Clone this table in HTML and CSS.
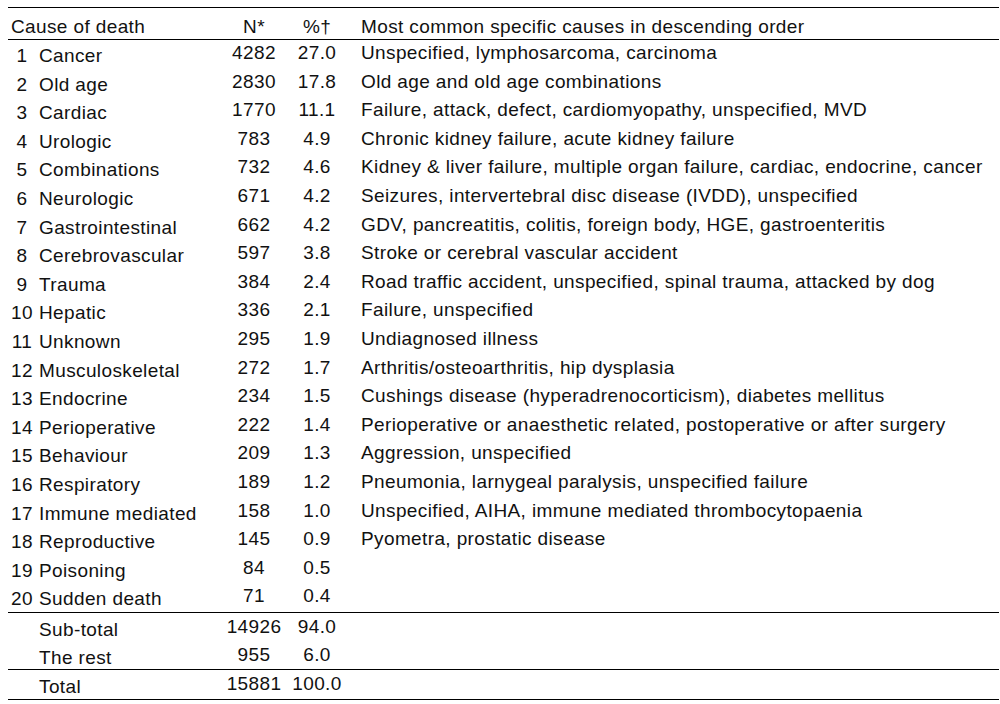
FILE: index.html
```html
<!DOCTYPE html>
<html>
<head>
<meta charset="utf-8">
<link rel="stylesheet" href="styles.css">
</head>
<body>
<div class="tbl">
  <div class="row head">
    <div class="cause">Cause of death</div>
    <div class="n">N*</div>
    <div class="p">%†</div>
    <div class="d">Most common specific causes in descending order</div>
  </div>
  <div class="section main">
    <div class="row"><div class="num">1</div><div class="name">Cancer</div><div class="n">4282</div><div class="p">27.0</div><div class="d">Unspecified, lymphosarcoma, carcinoma</div></div>
    <div class="row"><div class="num">2</div><div class="name">Old age</div><div class="n">2830</div><div class="p">17.8</div><div class="d">Old age and old age combinations</div></div>
    <div class="row"><div class="num">3</div><div class="name">Cardiac</div><div class="n">1770</div><div class="p">11.1</div><div class="d">Failure, attack, defect, cardiomyopathy, unspecified, MVD</div></div>
    <div class="row"><div class="num">4</div><div class="name">Urologic</div><div class="n">783</div><div class="p">4.9</div><div class="d">Chronic kidney failure, acute kidney failure</div></div>
    <div class="row"><div class="num">5</div><div class="name">Combinations</div><div class="n">732</div><div class="p">4.6</div><div class="d">Kidney &amp; liver failure, multiple organ failure, cardiac, endocrine, cancer</div></div>
    <div class="row"><div class="num">6</div><div class="name">Neurologic</div><div class="n">671</div><div class="p">4.2</div><div class="d">Seizures, intervertebral disc disease (IVDD), unspecified</div></div>
    <div class="row"><div class="num">7</div><div class="name">Gastrointestinal</div><div class="n">662</div><div class="p">4.2</div><div class="d">GDV, pancreatitis, colitis, foreign body, HGE, gastroenteritis</div></div>
    <div class="row"><div class="num">8</div><div class="name">Cerebrovascular</div><div class="n">597</div><div class="p">3.8</div><div class="d">Stroke or cerebral vascular accident</div></div>
    <div class="row"><div class="num">9</div><div class="name">Trauma</div><div class="n">384</div><div class="p">2.4</div><div class="d">Road traffic accident, unspecified, spinal trauma, attacked by dog</div></div>
    <div class="row"><div class="num">10</div><div class="name">Hepatic</div><div class="n">336</div><div class="p">2.1</div><div class="d">Failure, unspecified</div></div>
    <div class="row"><div class="num">11</div><div class="name">Unknown</div><div class="n">295</div><div class="p">1.9</div><div class="d">Undiagnosed illness</div></div>
    <div class="row"><div class="num">12</div><div class="name">Musculoskeletal</div><div class="n">272</div><div class="p">1.7</div><div class="d">Arthritis/osteoarthritis, hip dysplasia</div></div>
    <div class="row"><div class="num">13</div><div class="name">Endocrine</div><div class="n">234</div><div class="p">1.5</div><div class="d">Cushings disease (hyperadrenocorticism), diabetes mellitus</div></div>
    <div class="row"><div class="num">14</div><div class="name">Perioperative</div><div class="n">222</div><div class="p">1.4</div><div class="d">Perioperative or anaesthetic related, postoperative or after surgery</div></div>
    <div class="row"><div class="num">15</div><div class="name">Behaviour</div><div class="n">209</div><div class="p">1.3</div><div class="d">Aggression, unspecified</div></div>
    <div class="row"><div class="num">16</div><div class="name">Respiratory</div><div class="n">189</div><div class="p">1.2</div><div class="d">Pneumonia, larnygeal paralysis, unspecified failure</div></div>
    <div class="row"><div class="num">17</div><div class="name">Immune mediated</div><div class="n">158</div><div class="p">1.0</div><div class="d">Unspecified, AIHA, immune mediated thrombocytopaenia</div></div>
    <div class="row"><div class="num">18</div><div class="name">Reproductive</div><div class="n">145</div><div class="p">0.9</div><div class="d">Pyometra, prostatic disease</div></div>
    <div class="row"><div class="num">19</div><div class="name">Poisoning</div><div class="n">84</div><div class="p">0.5</div><div class="d"></div></div>
    <div class="row"><div class="num">20</div><div class="name">Sudden death</div><div class="n">71</div><div class="p">0.4</div><div class="d"></div></div>
  </div>
  <div class="section sub">
    <div class="row"><div class="num"></div><div class="name">Sub-total</div><div class="n">14926</div><div class="p">94.0</div><div class="d"></div></div>
    <div class="row"><div class="num"></div><div class="name">The rest</div><div class="n">955</div><div class="p">6.0</div><div class="d"></div></div>
  </div>
  <div class="section total">
    <div class="row"><div class="num"></div><div class="name">Total</div><div class="n">15881</div><div class="p">100.0</div><div class="d"></div></div>
  </div>
</div>
</body>
</html>
```

FILE: styles.css
```css
html, body {
  margin: 0;
  padding: 0;
  background: #ffffff;
}
body {
  padding: 7px 0 0 8px;
  font-family: "Liberation Sans", Arial, sans-serif;
  font-size: 19px;
  line-height: 20px;
  letter-spacing: 0.38px;
  color: #111;
}
.tbl {
  width: 991px;
  border-top: 1px solid #000;
}
.row {
  display: grid;
  grid-template-columns: 28px 189px 58px 68px 1fr;
  align-items: start;
  white-space: nowrap;
}
.head {
  height: 31px;
  border-bottom: 1px solid #000;
}
.head .cause {
  grid-column: 1 / 3;
  padding: 9px 0 0 3px;
}
.head .n, .head .p, .head .d {
  padding-top: 9px;
}
.main .row { height: 28.6px; }
.main { border-bottom: 1px solid #000; }
.sub .row { height: 28px; }
.sub { border-bottom: 1px solid #000; }
.total .row { height: 29px; }
.total { border-bottom: 1px solid #000; }
.num {
  text-align: center;
  padding-top: 6px;
}
.name {
  padding: 6px 0 0 3px;
}
.sub .name, .total .name {
  padding-top: 7px;
}
.n, .p {
  text-align: center;
  padding-top: 3px;
}
.sub .n, .sub .p, .total .n, .total .p {
  padding-top: 4px;
}
.d {
  padding: 3px 0 0 10px;
}
```
